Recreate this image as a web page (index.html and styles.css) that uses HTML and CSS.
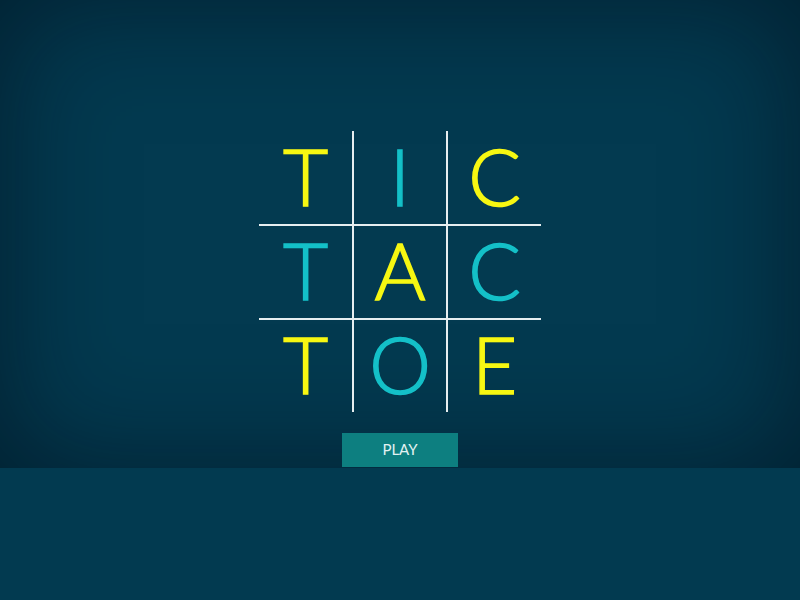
FILE: index.html
```html
<!DOCTYPE html>
<html>
<head>
<meta charset="utf-8">
<link rel="stylesheet" href="styles.css">
<title>Tic Tac Toe</title>
</head>
<body>
<section class="stage">
  <div class="board">
    <div class="cell yellow">T</div>
    <div class="cell cyan">I</div>
    <div class="cell yellow">C</div>
    <div class="cell cyan">T</div>
    <div class="cell yellow">A</div>
    <div class="cell cyan">C</div>
    <div class="cell yellow">T</div>
    <div class="cell cyan">O</div>
    <div class="cell yellow">E</div>
  </div>
  <button class="play">PLAY</button>
</section>
<section class="floor"></section>
</body>
</html>
```
FILE: styles.css
```css
html, body {
  margin: 0;
  padding: 0;
  height: 100%;
  background: #023a50;
  font-family: Lato, "Open Sans", sans-serif;
  overflow: hidden;
}
.stage {
  height: 468px;
  box-sizing: border-box;
  padding-top: 131px;
  display: flex;
  flex-direction: column;
  align-items: center;
  background: #033a50;
  box-shadow: inset 0 0 120px rgba(0, 10, 20, 0.55);
}
.board {
  display: grid;
  grid-template-columns: 95px 94px 93px;
  grid-template-rows: 95px 94px 92px;
}
.cell {
  display: flex;
  align-items: center;
  justify-content: center;
  box-sizing: border-box;
  padding-bottom: 4px;
  font-size: 78px;
  font-weight: 300;
  line-height: 1;
  -webkit-text-stroke: 1.5px currentColor;
}
.cell:nth-child(3n+1),
.cell:nth-child(3n+2) {
  border-right: 2px solid #e6eef0;
}
.cell:nth-child(-n+6) {
  border-bottom: 2px solid #e6eef0;
}
.yellow { color: #f7f712; }
.cyan { color: #14c0c8; }
.play {
  margin-top: 21px;
  width: 116px;
  height: 34px;
  padding: 0 0 2px;
  border: none;
  background: #0d7f80;
  color: #e2f2f2;
  font-family: Lato, sans-serif;
  font-size: 15px;
}
.floor {
  height: 132px;
  background: #023a50;
}
```
